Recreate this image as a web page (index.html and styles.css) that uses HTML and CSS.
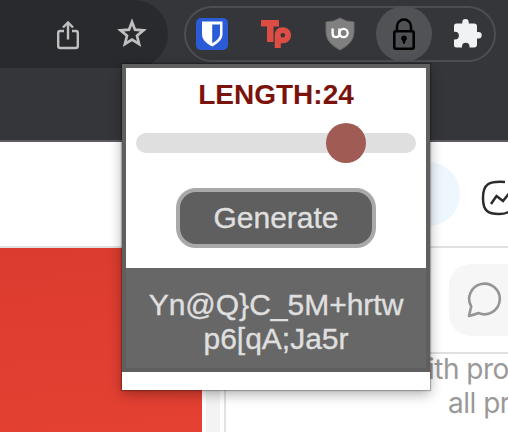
FILE: index.html
```html
<!DOCTYPE html>
<html lang="en">
<head>
<meta charset="utf-8">
<title>Password generator</title>
<link rel="stylesheet" href="styles.css">
</head>
<body>
<header class="toolbar">
  <div class="omnibox">
    <svg class="share" width="24" height="30" viewBox="0 0 24 30" fill="none" stroke="#bfbfc0" stroke-width="2.4"><path d="M8 11H4Q2.200 11 2.200 13V26Q2.200 28 4.400 28H19.600Q21.800 28 21.800 26V13Q21.800 11 20 11H16M12 19.500V2.500M7 7.500L12 2.500L17 7.500"/></svg>
    <svg class="star" width="32" height="32" viewBox="0 0 32 32" fill="none" stroke="#bfbfc0" stroke-width="2.700"><path d="M16 5L19 12.700L27.500 13.300L21 18.800L23.100 27L16 22.600L8.900 27L11 18.800L4.500 13.300L13 12.700Z"/></svg>
  </div>
  <div class="extensions">
    <svg class="shield" width="32" height="32" viewBox="0 0 32 32"><rect width="32" height="32" rx="5" fill="#2b5bd7"/><path d="M6 3.500H26.500V16C26.500 22 21 26 16.200 28.500C11 26 6 22 6 16Z" fill="#fff"/><path d="M16.200 6.500H24V16C24 20 20 23 16.200 25.200Z" fill="#2b5bd7"/></svg>
    <svg class="tp" width="32" height="32" viewBox="0 0 32 32" fill="#de4d43"><path d="M1 2H19V8.500H13.500V24H7V8.500H1Z"/><path fill-rule="evenodd" d="M14.700 30V17.500C14.700 12.500 18 9.300 22.500 9.300C27.500 9.300 31 12.500 31 17.300C31 22 27.500 25.300 23 25.300H20.800V30ZM22.800 15A2.300 2.300 0 1 0 22.800 19.600A2.300 2.300 0 1 0 22.800 15Z"/></svg>
    <svg class="ublock" width="32" height="34" viewBox="0 0 32 34"><path d="M16 1Q22 5 30 5V14C30 23 25 28 16 33C7 28 2 23 2 14V5Q10 5 16 1Z" fill="#808080" stroke="#6c6c6c"/><path d="M8.600 11.500V16.500Q8.600 20.200 12 20.200Q15.400 20.200 15.400 16.500V11.500" fill="none" stroke="#fff" stroke-width="2.300"/><circle cx="19.600" cy="16" r="4.100" fill="none" stroke="#fff" stroke-width="2.300"/></svg>
    <div class="active">
      <svg width="24" height="34" viewBox="0 0 24 34" fill="none" stroke="#000" stroke-width="2.500"><path d="M5 14V9.500A7 7 0 0 1 19 9.500V14"/><rect x="2.300" y="14.300" width="19.400" height="17.400" rx="1.500"/><circle cx="12" cy="21.300" r="2.800" fill="#000" stroke="none"/><path d="M12 21V25.500" stroke-linecap="round" stroke-width="2.600"/></svg>
    </div>
    <svg class="puzzle" width="30" height="30" viewBox="0 0 30 30" fill="#f1f2f4"><path d="M3.500 5.500H9.300V4.300A3.200 3.200 0 0 1 15.700 4.300V5.500H21Q24 5.500 24 8.500V14H25.500A3.200 3.200 0 0 1 25.500 20.400H24V26.500Q24 29.500 21 29.500H16.500V28.500A3.700 3.700 0 0 0 9 28.500V29.500H3.500Q1 29.500 1 27V21.500H2A3.800 3.800 0 0 0 2 13.700H1V8Q1 5.500 3.500 5.500Z"/></svg>
  </div>
</header>
<main class="page">
  <div class="page-head">
    <div class="bubble"></div>
    <svg class="activity" width="36" height="36" viewBox="0 0 36 36" fill="none" stroke="#2c2c2e" stroke-width="2.500"><path d="M24 2C8 1 2 3.500 2 18C2 31.500 7.500 34 18 34C29 34 34 29 34 18"/><path d="M10 24L15.500 16L22 21L30 11"/></svg>
  </div>
  <div class="page-body">
    <div class="photo"></div>
    <div class="gutter"></div>
    <div class="feed">
      <div class="reply-row">
        <div class="reply">
          <svg width="38" height="38" viewBox="0 0 38 38" fill="none" stroke="#959595" stroke-width="2.600"><path d="M3 35L5.200 25.500A15.300 15.300 0 1 1 12.500 32Q8 33.800 3 35Z" stroke-linejoin="round"/></svg>
        </div>
      </div>
      <p class="copy first">ith pro</p>
      <p class="copy second">all pr</p>
    </div>
  </div>
</main>
<section class="popup">
  <div class="generator">
    <div class="controls">
      <div class="length">LENGTH:24</div>
      <div class="slider"><div class="thumb"></div></div>
      <button class="generate">Generate</button>
    </div>
    <div class="password">Yn@Q}C_5M+hrtw<br>p6[qA;Ja5r</div>
  </div>
</section>
</body>
</html>
```
FILE: styles.css
```css
* { box-sizing: border-box; }
body {
  margin: 0;
  width: 508px;
  height: 432px;
  position: relative;
  overflow: hidden;
  background: #fff;
  font-family: "Liberation Sans", Arial, sans-serif;
}
svg { display: block; flex: none; }

.toolbar {
  height: 142px;
  background: #35363a;
  border-bottom: 2px solid #5e5c62;
  display: flex;
  align-items: flex-start;
}
.omnibox {
  width: 168px;
  height: 68px;
  background: #292a2d;
  border-radius: 0 34px 34px 0;
  display: flex;
  padding: 20px 0 0 56px;
}
.star { margin: -3px 0 0 36px; }
.extensions {
  width: 312px;
  height: 56px;
  margin: 6px 0 0 16px;
  border: 2px solid #4d4e53;
  border-radius: 28px;
  display: flex;
  align-items: center;
  padding-left: 10px;
}
.tp { margin-left: 32px; }
.ublock { margin-left: 32px; }
.active {
  width: 56px;
  height: 56px;
  margin-left: 20px;
  border-radius: 50%;
  background: #515256;
  display: flex;
  align-items: center;
  justify-content: center;
  flex: none;
}
.puzzle { margin: -3px 0 0 21px; }

.page-head {
  height: 106px;
  border-bottom: 2px solid #e1e1e1;
  display: flex;
  padding-left: 396px;
}
.bubble {
  width: 64px;
  height: 64px;
  margin-top: 20px;
  border-radius: 50%;
  background: #eff7fe;
  flex: none;
}
.activity { margin: 38px 0 0 21px; }
.page-body { height: 184px; display: flex; }
.photo {
  width: 202px;
  background: linear-gradient(175deg, #db3b2f, #e44132);
  flex: none;
}
.gutter {
  width: 14px;
  margin: 0 4px;
  background: #f3f3f3;
  flex: none;
}
.feed {
  width: 284px;
  border-left: 2px solid #e1e1e1;
  overflow: hidden;
  flex: none;
}
.reply-row {
  height: 106px;
  border-bottom: 2px solid #e1e1e1;
  padding: 16px 0 0 223px;
}
.reply {
  width: 90px;
  height: 72px;
  border-radius: 22px;
  background: #f6f6f6;
  padding: 17px 0 0 17px;
}
.copy {
  margin: 0;
  font: 28px/34px Inter, "Liberation Sans", sans-serif;
  letter-spacing: -0.5px;
  color: #999;
  white-space: nowrap;
}
.first { padding-left: 202px; margin-top: -2px; }
.second { padding-left: 222px; }

.popup {
  position: absolute;
  left: 122px;
  top: 64px;
  width: 308px;
  height: 326px;
  background: #fff;
  box-shadow: 0 0 1px 1px rgba(0,0,0,.25), 0 4px 12px rgba(0,0,0,.32);
}
.generator {
  height: 308px;
  border: 4px solid #5f5f5f;
  text-align: center;
}
.controls {
  height: 200px;
  padding: 11px 10px 0;
  display: flex;
  flex-direction: column;
  align-items: center;
}
.length {
  height: 32px;
  font-weight: bold;
  font-size: 28px;
  line-height: 32px;
  color: #7b130d;
}
.slider {
  width: 280px;
  height: 20px;
  margin-top: 22px;
  border-radius: 10px;
  background: #dfdfdf;
  display: flex;
  align-items: center;
  padding-left: 190px;
}
.thumb {
  width: 40px;
  height: 40px;
  border-radius: 50%;
  background: #a05b55;
  flex: none;
}
.generate {
  width: 200px;
  height: 60px;
  margin-top: 35px;
  padding: 0;
  border: 4px solid #a9a9a9;
  border-radius: 20px;
  background: #5f5f5f;
  color: #dfdfdf;
  font: 30px/34px "Liberation Sans", Arial, sans-serif;
  -webkit-text-stroke: 0.4px #dfdfdf;
}
.password {
  height: 100px;
  padding-top: 20px;
  background: #676767;
  color: #dfdfdf;
  font-size: 30px;
  line-height: 34px;
  -webkit-text-stroke: 0.4px #dfdfdf;
}
```
